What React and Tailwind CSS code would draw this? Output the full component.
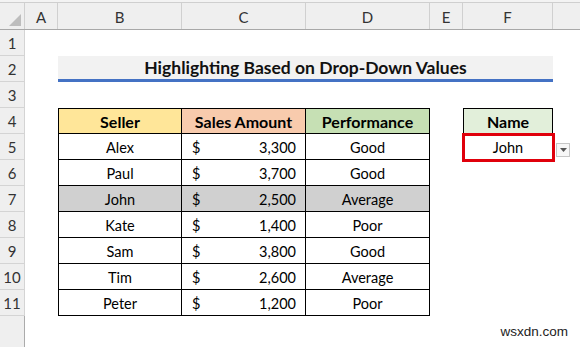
import React from 'react';

const font = { fontFamily: 'Lato, "Noto Sans", sans-serif' };

const rows = [
  { seller: 'Alex', amount: '3,300', perf: 'Good' },
  { seller: 'Paul', amount: '3,700', perf: 'Good' },
  { seller: 'John', amount: '2,500', perf: 'Average', hl: true },
  { seller: 'Kate', amount: '1,400', perf: 'Poor' },
  { seller: 'Sam', amount: '3,800', perf: 'Good' },
  { seller: 'Tim', amount: '2,600', perf: 'Average' },
  { seller: 'Peter', amount: '1,200', perf: 'Poor' },
];

const RowHead = ({ n }) => (
  <div className="w-[25px] shrink-0 h-full bg-[#efefef] border-r border-[#ababab] border-b border-[#d4d4d4] flex items-center justify-center pt-[2px] text-[15px] text-[#333]">
    {n}
  </div>
);

const ColHead = ({ label, w }) => (
  <div className={`${w} shrink-0 h-full border-r border-[#d0d0d0] flex items-center justify-center pt-[2px] text-[15px] text-[#333]`}>
    {label}
  </div>
);

const Blank = ({ w, children, className = '' }) => (
  <div className={`${w} shrink-0 h-full ${className}`}>{children}</div>
);

export default function App() {
  return (
    <div className="w-[580px] h-[347px] bg-white overflow-hidden relative text-black" style={font}>
      {/* top strip */}
      <div className="h-[3px] bg-[#f3f3f3] border-b border-[#cfcfcf]" />

      {/* column headers */}
      <div className="flex h-[27px] bg-[#efefef] border-b border-[#a8a8a8]">
        <div className="w-[25px] shrink-0 h-full border-r border-[#d0d0d0] relative">
          <svg className="absolute right-[3px] bottom-[3px]" width="12" height="12" viewBox="0 0 12 12">
            <polygon points="12,0 12,12 0,12" fill="#bdbdbd" />
          </svg>
        </div>
        <ColHead label="A" w="w-[33px]" />
        <ColHead label="B" w="w-[124px]" />
        <ColHead label="C" w="w-[124px]" />
        <ColHead label="D" w="w-[124px]" />
        <ColHead label="E" w="w-[33px]" />
        <ColHead label="F" w="w-[90px]" />
        <div className="flex-1 h-full" />
      </div>

      {/* row 1 */}
      <div className="flex h-[26px]">
        <RowHead n={1} />
      </div>

      {/* row 2: title */}
      <div className="flex h-[26px]">
        <RowHead n={2} />
        <Blank w="w-[33px]" />
        <div className="w-[495px] shrink-0 h-full bg-[#f2f2f2] border-b-[3px] border-[#4472c4] flex items-center justify-center pt-[2px] font-bold text-[17.5px] text-[#111]">
          Highlighting Based on Drop-Down Values
        </div>
      </div>

      {/* row 3 */}
      <div className="flex h-[26px]">
        <RowHead n={3} />
      </div>

      {/* row 4: headers */}
      <div className="flex h-[26px]">
        <RowHead n={4} />
        <Blank w="w-[33px]" />
        <div className="w-[124px] shrink-0 h-full bg-[#ffe699] border border-black flex items-center justify-center pt-[2px] font-bold text-[16px]">
          Seller
        </div>
        <div className="w-[124px] shrink-0 h-full bg-[#f8cbad] border-y border-r border-black flex items-center justify-center pt-[2px] font-bold text-[16px]">
          Sales Amount
        </div>
        <div className="w-[124px] shrink-0 h-full bg-[#c6e0b4] border-y border-r border-black flex items-center justify-center pt-[2px] font-bold text-[16px]">
          Performance
        </div>
        <Blank w="w-[33px]" />
        <div className="w-[90px] shrink-0 h-full bg-[#e2efda] border border-black flex items-center justify-center pt-[2px] font-bold text-[16px]">
          Name
        </div>
      </div>

      {/* data rows */}
      {rows.map((r, i) => {
        const bg = r.hl ? 'bg-[#d0d0d0]' : 'bg-white';
        return (
          <div key={r.seller} className="flex h-[26px]">
            <RowHead n={i + 5} />
            <Blank w="w-[33px]" />
            <div className={`w-[124px] shrink-0 h-full ${bg} border-x border-b border-black flex items-center justify-center pt-[2px] text-[14.5px]`}>
              {r.seller}
            </div>
            <div className={`w-[124px] shrink-0 h-full ${bg} border-r border-b border-black flex items-center justify-between pt-[2px] pl-[10px] pr-[9px] text-[14.5px]`}>
              <span>$</span>
              <span>{r.amount}</span>
            </div>
            <div className={`w-[124px] shrink-0 h-full ${bg} border-r border-b border-black flex items-center justify-center pt-[2px] text-[14.5px]`}>
              {r.perf}
            </div>
            {i === 0 && (
              <>
                <Blank w="w-[33px]" />
                <div className="w-[90px] shrink-0 h-full relative flex items-center justify-center pt-[2px] text-[14.5px]">
                  John
                  <div className="absolute -left-[1px] -top-[1px] -right-[2px] -bottom-[2px] border-[3px] border-[#e0000b]" />
                </div>
                <Blank w="w-[20px]" className="pl-[3px] pt-[9px]">
                  <div className="w-[14px] h-[14px] border border-[#c6c6c6] bg-[#f7f7f7] flex items-center justify-center">
                    <svg width="7" height="4" viewBox="0 0 7 4">
                      <polygon points="0,0 7,0 3.5,4" fill="#555" />
                    </svg>
                  </div>
                </Blank>
              </>
            )}
          </div>
        );
      })}

      {/* trailing empty row header */}
      <div className="flex h-[31px]">
        <div className="w-[25px] shrink-0 h-full bg-[#efefef] border-r border-[#ababab]" />
      </div>

      <div
        className="absolute right-[12px] bottom-[5px] text-[13.5px] text-[#222]"
        style={{ fontFamily: '"Liberation Sans", Arial, sans-serif' }}
      >
        wsxdn.com
      </div>
    </div>
  );
}
